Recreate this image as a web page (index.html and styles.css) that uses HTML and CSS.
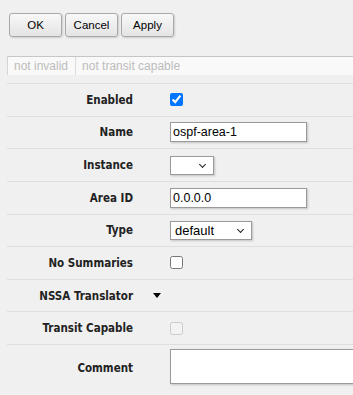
FILE: index.html
```html
<!DOCTYPE html>
<html>
<head>
<meta charset="utf-8">
<link rel="stylesheet" href="styles.css">
</head>
<body>
<div class="page">
  <div class="toolbar">
    <button class="btn">OK</button>
    <button class="btn">Cancel</button>
    <button class="btn">Apply</button>
  </div>
  <div class="status">
    <span class="cell">not invalid</span>
    <span class="cell">not transit capable</span>
  </div>
  <div class="form">
    <div class="row">
      <span class="lbl">Enabled</span><span class="tog"></span>
      <span class="ctl"><input type="checkbox" class="chk" checked></span>
    </div>
    <div class="row">
      <span class="lbl">Name</span><span class="tog"></span>
      <span class="ctl"><input type="text" class="txt" value="ospf-area-1"></span>
    </div>
    <div class="row">
      <span class="lbl">Instance</span><span class="tog"></span>
      <span class="ctl"><span class="sel sel-instance"><select><option></option></select></span></span>
    </div>
    <div class="row">
      <span class="lbl">Area ID</span><span class="tog"></span>
      <span class="ctl"><input type="text" class="txt" value="0.0.0.0"></span>
    </div>
    <div class="row">
      <span class="lbl">Type</span><span class="tog"></span>
      <span class="ctl"><span class="sel sel-type"><select><option>default</option></select></span></span>
    </div>
    <div class="row">
      <span class="lbl">No Summaries</span><span class="tog"></span>
      <span class="ctl"><input type="checkbox" class="chk"></span>
    </div>
    <div class="row">
      <span class="lbl">NSSA Translator</span><span class="tog"><span class="tri"></span></span>
      <span class="ctl"></span>
    </div>
    <div class="row">
      <span class="lbl">Transit Capable</span><span class="tog"></span>
      <span class="ctl"><input type="checkbox" class="chk" disabled></span>
    </div>
    <div class="row row-comment">
      <span class="lbl">Comment</span><span class="tog"></span>
      <span class="ctl"><textarea class="area"></textarea></span>
    </div>
  </div>
</div>
</body>
</html>
```

FILE: styles.css
```css
html, body {
  margin: 0;
  padding: 0;
  background: #f0f0f0;
  overflow: hidden;
}
body {
  font-family: "Liberation Sans", Arial, sans-serif;
  color: #000;
}
.page {
  height: 395px;
}
.toolbar {
  display: flex;
  gap: 3px;
  padding: 13px 0 0 9px;
}
.btn {
  width: 53px;
  height: 24px;
  padding: 0;
  font-family: "Liberation Sans", Arial, sans-serif;
  font-size: 11.5px;
  color: #000;
  background: linear-gradient(#f8f8f8, #e4e4e4);
  border: 1px solid #a9a9a9;
  border-radius: 3px;
  box-shadow: 1px 1px 2px rgba(0, 0, 0, 0.15);
}
.status {
  display: flex;
  margin: 19px 0 0 7px;
  height: 18px;
  border-top: 1px solid #c6c6c6;
  border-left: 1px solid #d4d4d4;
  background: #f9f9f9;
  font-size: 12px;
  color: #bcbcbc;
}
.cell {
  line-height: 18px;
  padding: 0 7px 0 6px;
  border-right: 1px solid #dcdcdc;
}
.cell + .cell {
  border-right: none;
}
.form {
  margin: 8px 0 0 7px;
}
.row {
  display: grid;
  grid-template-columns: 126px 37px 1fr;
  align-items: center;
  height: 31.625px;
  border-top: 1px solid #dedede;
}
.lbl {
  text-align: right;
  font-family: "DejaVu Sans Condensed", "DejaVu Sans", sans-serif;
  font-weight: bold;
  font-size: 11.5px;
  color: #222;
}
.tog {
  display: flex;
  align-items: center;
  padding-left: 20px;
}
.tri {
  width: 0;
  height: 0;
  border-left: 4px solid transparent;
  border-right: 4px solid transparent;
  border-top: 5px solid #000;
}
.ctl {
  display: flex;
  align-items: center;
}
.chk {
  margin: 0;
  width: 13px;
  height: 13px;
}
.txt {
  box-sizing: border-box;
  width: 137px;
  height: 20px;
  margin: 0;
  padding: 0 2px;
  border: 1px solid #9a9a9a;
  background: #fff;
  box-shadow: 1px 1px 2px rgba(0, 0, 0, 0.2);
  font-family: "Liberation Sans", Arial, sans-serif;
  font-size: 12.5px;
  color: #000;
}
.sel {
  position: relative;
  display: inline-block;
}
.sel select {
  -webkit-appearance: none;
  appearance: none;
  box-sizing: border-box;
  height: 19px;
  margin: 0;
  padding: 0 0 0 4px;
  border: 1px solid #9a9a9a;
  border-radius: 0;
  background: #fff;
  box-shadow: 1px 1px 2px rgba(0, 0, 0, 0.2);
  font-family: "Liberation Sans", Arial, sans-serif;
  font-size: 13px;
  color: #000;
}
.sel-instance select {
  width: 44px;
}
.sel-type select {
  width: 82px;
}
.sel::after {
  content: "";
  position: absolute;
  right: 9px;
  top: 6px;
  width: 4px;
  height: 4px;
  border-right: 1.3px solid #222;
  border-bottom: 1.3px solid #222;
  transform: rotate(45deg);
  pointer-events: none;
}
.row-comment {
  height: auto;
  align-items: start;
  padding-top: 4px;
}
.row-comment .lbl {
  padding-top: 12px;
}
.area {
  box-sizing: border-box;
  width: 200px;
  height: 35px;
  margin: 0;
  border: 1px solid #9a9a9a;
  background: #fff;
  box-shadow: 1px 1px 2px rgba(0, 0, 0, 0.2);
  resize: none;
}
```
